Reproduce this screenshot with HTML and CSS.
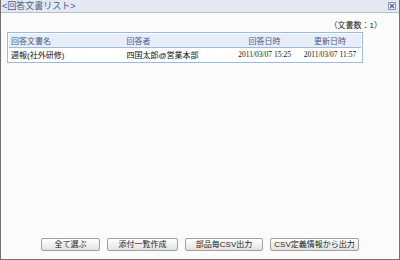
FILE: index.html
```html
<!DOCTYPE html>
<html lang="ja">
<head>
    <meta charset="UTF-8">
    <title>回答文書リスト</title>
    <link rel="stylesheet" href="styles.css">
</head>
<body>
    <div class="window">
        <div class="titlebar">
            <span class="title">&lt;回答文書リスト&gt;</span>
            <span class="close">
                <svg width="8" height="8" viewBox="0 0 8 8">
                    <rect x="0.5" y="0.5" width="7" height="7" fill="#eef1f8" stroke="#8a97b5"/>
                    <path d="M2 2 L6 6 M6 2 L2 6" stroke="#4c5a86" stroke-width="1.1"/>
                </svg>
            </span>
        </div>

        <div class="content">
            <div class="count">（文書数：1）</div>

            <table class="doc-list">
                <thead>
                    <tr>
                        <th class="col-name">回答文書名</th>
                        <th class="col-user">回答者</th>
                        <th class="col-date">回答日時</th>
                        <th class="col-update">更新日時</th>
                    </tr>
                </thead>
                <tbody>
                    <tr>
                        <td class="col-name">週報(社外研修)</td>
                        <td class="col-user">四国太郎@営業本部</td>
                        <td class="col-date date">2011/03/07 15:25</td>
                        <td class="col-update date">2011/03/07 11:57</td>
                    </tr>
                </tbody>
            </table>

            <div class="buttons">
                <button class="btn btn-all">全て選ぶ</button>
                <button class="btn btn-attach">添付一覧作成</button>
                <button class="btn btn-parts">部品毎CSV出力</button>
                <button class="btn btn-def">CSV定義情報から出力</button>
            </div>
        </div>
    </div>
</body>
</html>
```

FILE: styles.css
```css
html, body {
    margin: 0;
    padding: 0;
}

body {
    font-family: "Liberation Sans", "Noto Sans CJK JP", sans-serif;
    font-size: 8px;
    color: #222;
    background: #fbfbfb;
}

.window {
    width: 400px;
    height: 260px;
    box-sizing: border-box;
    border: 1px solid #707070;
    border-top: none;
    display: flex;
    flex-direction: column;
}

.titlebar {
    height: 12px;
    border-bottom: 1px solid #b4bdd2;
    background: #e4e8f2;
    display: flex;
    align-items: center;
    justify-content: space-between;
    padding: 0 3px 0 1px;
}

.title {
    color: #4c5a86;
    font-size: 9px;
    line-height: 12px;
}

.close svg {
    display: block;
}

.content {
    flex: 1;
    display: flex;
    flex-direction: column;
    padding: 0 6px;
    background: #fbfbfb;
}

.count {
    text-align: right;
    padding-right: 11px;
    margin-top: 7px;
    height: 12px;
    line-height: 12px;
}

.doc-list {
    width: 356px;
    border-collapse: separate;
    border-spacing: 0;
    border: 1px solid #9cb9de;
    background: #fff;
    padding: 1px;
}

.doc-list th,
.doc-list td {
    padding: 0 2px;
    white-space: nowrap;
    font-weight: normal;
}

.doc-list th {
    height: 13px;
    background: #e8eef9;
    color: #4c5a86;
    border-bottom: 1px solid #9cb9de;
    text-align: left;
}

.doc-list td {
    height: 13px;
    color: #111;
}

.col-name { width: 112px; }
.col-user { width: 108px; }
.col-date { width: 50px; text-align: center !important; }
.col-update { width: 58px; text-align: center !important; padding-left: 8px !important; }

.date {
    font-family: "Liberation Serif", serif;
    font-size: 7.5px;
}

.buttons {
    margin-top: auto;
    margin-bottom: 8px;
    display: flex;
    justify-content: center;
    gap: 7px;
}

.btn {
    font-family: "Liberation Sans", "Noto Sans CJK JP", sans-serif;
    font-size: 8px;
    height: 13px;
    line-height: 11px;
    padding: 0;
    border: 1px solid #a0a0a0;
    border-radius: 2px;
    background: linear-gradient(#ffffff, #e2e2e2);
    color: #222;
}

.btn-all { width: 59px; }
.btn-attach { width: 71px; }
.btn-parts { width: 78px; }
.btn-def { width: 89px; }
```
